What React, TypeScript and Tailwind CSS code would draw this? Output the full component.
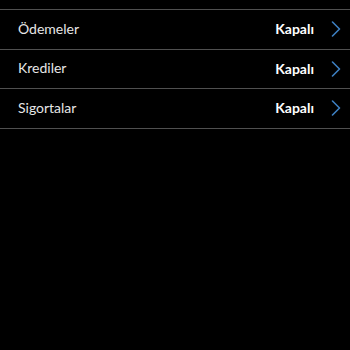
import React from "react";

const rows = ["Ödemeler", "Krediler", "Sigortalar"];

function Chevron() {
  return (
    <svg width="10" height="16" viewBox="0 0 10 16" fill="none">
      <path d="M1.5 1 L8.5 8 L1.5 15" stroke="#3d7fc1" strokeWidth="1.6" strokeLinecap="round" strokeLinejoin="round" />
    </svg>
  );
}

export default function App() {
  return (
    <div className="w-[350px] h-[350px] bg-black pt-[9px] font-['Lato',sans-serif]">
      <div className="border-t border-[#505050]">
        {rows.map((r) => (
          <div key={r} className="flex h-[39.5px] items-center border-b border-[#505050] pl-[18px] pr-[9px]">
            <span className="flex-1 text-[14px] text-[#e6e6e6] -mt-[2px]">{r}</span>
            <span className="text-[14px] font-bold text-white -mt-[1px]">Kapalı</span>
            <span className="ml-[17px] flex items-center">
              <Chevron />
            </span>
          </div>
        ))}
      </div>
    </div>
  );
}
